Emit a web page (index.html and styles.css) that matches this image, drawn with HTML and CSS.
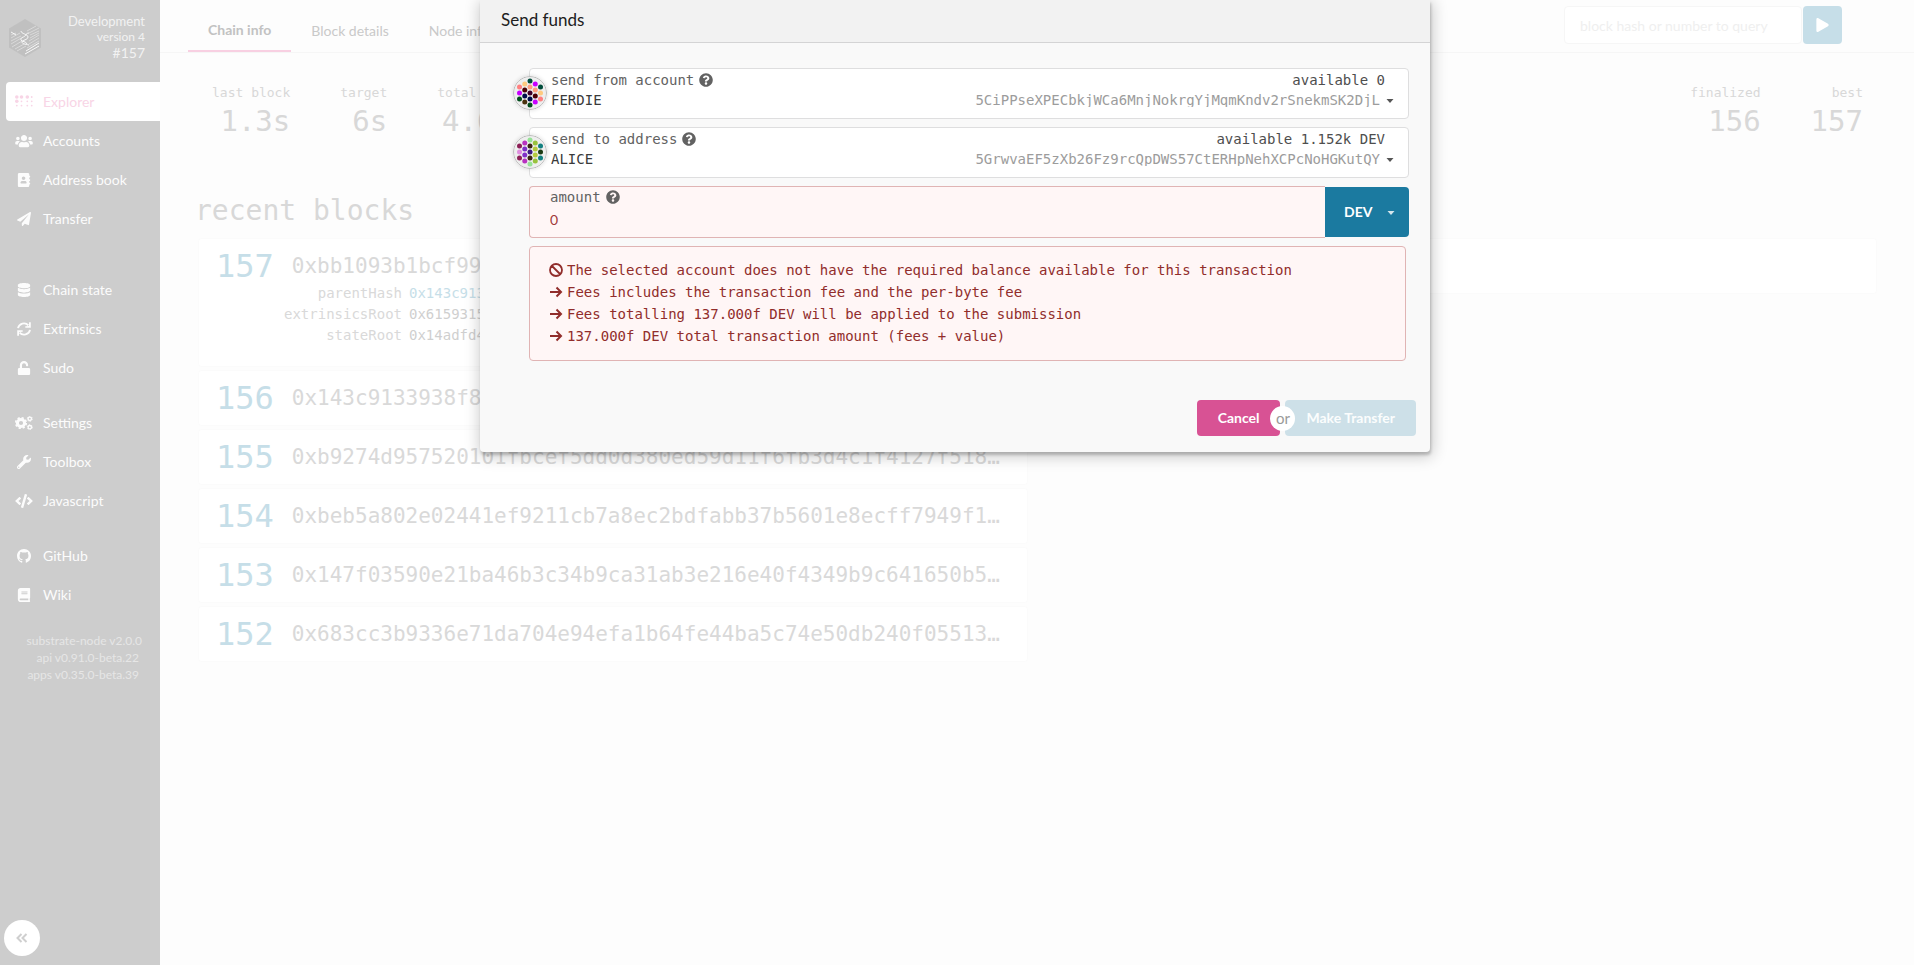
FILE: index.html
```html
<!DOCTYPE html>
<html lang="en">
<head>
<meta charset="utf-8">
<meta name="viewport" content="width=device-width, initial-scale=1">
<title>Explorer</title>
<link rel="stylesheet" href="styles.css">
</head>
<body>
<svg class="sprite" aria-hidden="true">
  <symbol id="i-help" viewBox="0 0 512 512"><path d="M504 256c0 136.997-111.043 248-248 248S8 392.997 8 256C8 119.083 119.043 8 256 8s248 111.083 248 248zM262.655 90c-54.497 0-89.255 22.957-116.549 63.758-3.536 5.286-2.353 12.415 2.715 16.258l34.699 26.31c5.205 3.947 12.621 3.008 16.665-2.122 17.864-22.658 30.113-35.797 57.303-35.797 20.429 0 45.698 13.148 45.698 32.958 0 14.976-12.363 22.667-32.534 33.976C247.128 238.528 216 254.941 216 296v4c0 6.627 5.373 12 12 12h56c6.627 0 12-5.373 12-12v-1.333c0-28.462 83.186-29.647 83.186-106.667 0-58.002-60.165-102-116.531-102zM256 338c-25.365 0-46 20.635-46 46 0 25.364 20.635 46 46 46s46-20.636 46-46c0-25.365-20.635-46-46-46z"/></symbol>
  <symbol id="i-caret" viewBox="0 0 8 5"><path d="M.5 0h7L4 4z"/></symbol>
  <symbol id="i-arrow" viewBox="0 0 14 14"><path d="M1 7h11M7.500 2.500 12 7l-4.500 4.500" fill="none" stroke="currentColor" stroke-width="2"/></symbol>
  <symbol id="i-ban" viewBox="0 0 14 14"><path d="M7 1a6 6 0 1 0 0 12A6 6 0 0 0 7 1zM3 3l8 8" fill="none" stroke="currentColor" stroke-width="1.800"/></symbol>
</svg>

<div class="app">
  <aside class="sidebar">
    <header class="brand">
      <svg class="logo" viewBox="0 0 34 38" aria-hidden="true">
        <path class="logo-hex" d="M17 0 33 9.500v19L17 38 1 28.500v-19z"/>
        <path class="logo-lines" d="M3 16l5-2M3 19l9-5M3 22l10-5M3 25l12-7M4 28l10-6M7 30l9-5M9 32l9-5M19 12l9-5M21 14l10-5M22 16l9-4M22 19l9-5M21 22l10-6M21 25l10-6M19 29l12-7"/>
        <path class="logo-bright" d="M3 13l5 3M17 35l14-8M18 32l13-8M13 12c0 3 7 3 7 6s-6 3-6 5 3 2 7 3M21 14c-3 0-3 2-4 3s-5 2-4 4 5 1 6 4"/>
      </svg>
      <div class="brand-text">
        <div class="chain">Development</div>
        <div class="version">version 4</div>
        <div class="best">#157</div>
      </div>
    </header>
    <nav class="menu">
      <ul>
        <li><a class="item active" href="#"><svg class="icon" viewBox="0 0 18 14"><g><circle cx="1.800" cy="2" r="1.800"/><circle cx="6.500" cy="2" r="1.800"/><circle cx="12.300" cy="2" r="1.800"/><circle cx="16.700" cy="2" r=".9"/><circle cx="1.800" cy="6.300" r="1.800"/><circle cx="6.500" cy="6.300" r=".9"/><circle cx="12.300" cy="6.300" r=".9"/><circle cx="16.700" cy="6.300" r=".9"/><circle cx="1.800" cy="10.600" r=".9"/><circle cx="6.500" cy="10.600" r=".9"/><circle cx="12.300" cy="10.600" r=".9"/><circle cx="16.700" cy="10.600" r=".9"/></g></svg>Explorer</a></li>
        <li><a class="item" href="#"><svg class="icon" viewBox="0 0 640 512"><path d="M96 224c35.300 0 64-28.700 64-64s-28.700-64-64-64-64 28.700-64 64 28.700 64 64 64zm448 0c35.300 0 64-28.700 64-64s-28.700-64-64-64-64 28.700-64 64 28.700 64 64 64zm32 32h-64c-17.600 0-33.500 7.100-45.100 18.600 40.300 22.100 68.900 62 75.100 109.400h66c17.700 0 32-14.300 32-32v-32c0-35.300-28.700-64-64-64zm-256 0c61.900 0 112-50.100 112-112S381.900 32 320 32 208 82.100 208 144s50.100 112 112 112zm76.800 32h-8.300c-20.800 10-43.900 16-68.500 16s-47.600-6-68.500-16h-8.300C179.600 288 128 339.600 128 403.200V432c0 26.500 21.500 48 48 48h288c26.500 0 48-21.500 48-48v-28.800c0-63.600-51.600-115.200-115.200-115.200zm-223.700-13.400C161.500 263.100 145.600 256 128 256H64c-35.300 0-64 28.700-64 64v32c0 17.700 14.300 32 32 32h65.900c6.300-47.400 34.900-87.300 75.200-109.400z"/></svg>Accounts</a></li>
        <li><a class="item" href="#"><svg class="icon" viewBox="0 0 448 512"><path d="M436 160c6.600 0 12-5.400 12-12v-40c0-6.600-5.400-12-12-12h-20V48c0-26.500-21.500-48-48-48H48C21.500 0 0 21.500 0 48v416c0 26.500 21.500 48 48 48h320c26.500 0 48-21.500 48-48v-48h20c6.600 0 12-5.400 12-12v-40c0-6.600-5.400-12-12-12h-20v-64h20c6.600 0 12-5.400 12-12v-40c0-6.600-5.400-12-12-12h-20v-64h20zm-228-32c35.300 0 64 28.700 64 64s-28.700 64-64 64-64-28.700-64-64 28.700-64 64-64zm112 236.800c0 10.600-10 19.200-22.400 19.200H118.400C106 384 96 375.400 96 364.800v-19.200c0-31.800 30.100-57.600 67.200-57.600h5c12.300 5.100 25.700 8 39.800 8s27.600-2.900 39.800-8h5c37.100 0 67.200 25.800 67.200 57.600v19.200z"/></svg>Address book</a></li>
        <li><a class="item" href="#"><svg class="icon" viewBox="0 0 512 512"><path d="M476 3.200L12.500 270.600c-18.100 10.400-15.800 35.600 2.200 43.200L121 358.400l287.300-253.200c5.500-4.900 13.300 2.600 8.600 8.300L176 407v80.500c0 23.600 28.500 32.900 42.500 15.800L282 426l124.600 52.200c14.200 6 30.400-2.900 33-18.200l72-432C515 7.800 493.300-6.800 476 3.200z"/></svg>Transfer</a></li>
      </ul>
      <ul>
        <li><a class="item" href="#"><svg class="icon" viewBox="0 0 448 512"><path d="M448 73.143v45.714C448 159.143 347.667 192 224 192S0 159.143 0 118.857V73.143C0 32.857 100.333 0 224 0s224 32.857 224 73.143zM448 176v102.857C448 319.143 347.667 352 224 352S0 319.143 0 278.857V176c48.125 33.143 136.208 48.572 224 48.572S399.874 209.143 448 176zm0 160v102.857C448 479.143 347.667 512 224 512S0 479.143 0 438.857V336c48.125 33.143 136.208 48.572 224 48.572S399.874 369.143 448 336z"/></svg>Chain state</a></li>
        <li><a class="item" href="#"><svg class="icon" viewBox="0 0 14 14"><path d="M1 6.200A6 6 0 0 1 11.400 3.400M13 7.800A6 6 0 0 1 2.600 10.600" fill="none" stroke="currentColor" stroke-width="1.800"/><path d="M13.800.3v5.500H8.300V4.300l3.700-.2V.3zM.2 13.700V8.200h5.500v1.500L2 9.900v3.800z"/></svg>Extrinsics</a></li>
        <li><a class="item" href="#"><svg class="icon" viewBox="0 0 448 512"><path d="M400 256H152V152.900c0-39.600 31.700-72.500 71.300-72.900 40-.4 72.700 32.100 72.700 72v16c0 13.300 10.700 24 24 24h32c13.300 0 24-10.700 24-24v-16C376 68 307.500-.3 223.500 0 139.500.3 72 69.500 72 153.500V256H48c-26.500 0-48 21.500-48 48v160c0 26.500 21.500 48 48 48h352c26.500 0 48-21.500 48-48V304c0-26.500-21.500-48-48-48z"/></svg>Sudo</a></li>
      </ul>
      <ul>
        <li><a class="item" href="#"><svg class="icon" viewBox="0 0 18 14"><g fill="none" stroke="currentColor"><circle cx="6" cy="7" r="3.600" stroke-width="3"/><circle cx="6" cy="7" r="5.300" stroke-width="1.600" stroke-dasharray="2.200 1.960"/><circle cx="14.800" cy="2.800" r="1.700" stroke-width="1.400"/><circle cx="14.800" cy="2.800" r="2.500" stroke-width=".9" stroke-dasharray="1.400 1.220"/><circle cx="14.800" cy="11.200" r="1.700" stroke-width="1.400"/><circle cx="14.800" cy="11.200" r="2.500" stroke-width=".9" stroke-dasharray="1.400 1.220"/></g></svg>Settings</a></li>
        <li><a class="item" href="#"><svg class="icon" viewBox="0 0 512 512"><path d="M507.730 109.100c-2.240-9.030-13.540-12.090-20.120-5.510l-74.360 74.360-67.880-11.310-11.310-67.880 74.360-74.360c6.620-6.620 3.430-17.900-5.660-20.160-47.380-11.740-99.550.91-136.580 37.930-39.640 39.640-50.550 97.100-34.050 147.200L18.740 402.760c-24.990 24.990-24.990 65.510 0 90.500 24.990 24.990 65.510 24.990 90.500 0l213.210-213.210c50.120 16.710 107.470 5.680 147.370-34.220 37.070-37.070 49.700-89.320 37.910-136.730zM64 472c-13.250 0-24-10.750-24-24 0-13.260 10.750-24 24-24s24 10.740 24 24c0 13.250-10.750 24-24 24z"/></svg>Toolbox</a></li>
        <li><a class="item" href="#"><svg class="icon" viewBox="0 0 640 512"><path d="M278.900 511.500l-61-17.700c-6.400-1.800-10-8.500-8.200-14.900L346.200 8.700c1.800-6.400 8.500-10 14.900-8.200l61 17.700c6.400 1.800 10 8.500 8.200 14.900L293.800 503.300c-1.900 6.400-8.500 10.100-14.900 8.200zm-114-112.200l43.500-46.400c4.600-4.900 4.300-12.700-.8-17.200L117 256l90.600-79.700c5.100-4.500 5.500-12.300.8-17.200l-43.500-46.400c-4.500-4.800-12.100-5.100-17-.5L3.800 247.200c-5.100 4.700-5.100 12.800 0 17.500l144.100 135.100c4.900 4.600 12.500 4.400 17-.5zm327.200.6l144.100-135.100c5.100-4.700 5.100-12.800 0-17.500L492.100 112.100c-4.800-4.500-12.400-4.300-17 .5L431.600 159c-4.600 4.900-4.300 12.700.8 17.200L523 256l-90.600 79.700c-5.100 4.500-5.500 12.300-.8 17.200l43.500 46.400c4.500 4.900 12.100 5.100 17 .6z"/></svg>Javascript</a></li>
      </ul>
      <ul>
        <li><a class="item" href="#"><svg class="icon" viewBox="0 0 16 16"><path d="M8 0C3.580 0 0 3.580 0 8c0 3.540 2.290 6.530 5.470 7.590.4.070.55-.17.55-.38 0-.19-.01-.82-.01-1.490-2.010.37-2.530-.49-2.690-.94-.09-.23-.48-.94-.82-1.130-.28-.15-.68-.52-.01-.53.63-.01 1.080.58 1.230.82.72 1.210 1.870.87 2.330.66.07-.52.28-.87.51-1.070-1.780-.2-3.640-.89-3.640-3.950 0-.87.31-1.590.82-2.150-.08-.2-.36-1.020.08-2.120 0 0 .67-.21 2.200.82.64-.18 1.320-.27 2-.27s1.360.09 2 .27c1.530-1.040 2.200-.82 2.200-.82.44 1.100.16 1.920.08 2.120.51.56.82 1.270.82 2.150 0 3.070-1.870 3.750-3.650 3.950.29.25.54.73.54 1.480 0 1.070-.01 1.930-.01 2.200 0 .21.15.46.55.38A8.010 8.010 0 0016 8c0-4.420-3.580-8-8-8z"/></svg>GitHub</a></li>
        <li><a class="item" href="#"><svg class="icon" viewBox="0 0 448 512"><path d="M448 360V24c0-13.300-10.700-24-24-24H96C43 0 0 43 0 96v320c0 53 43 96 96 96h328c13.300 0 24-10.700 24-24v-16c0-7.500-3.500-14.300-8.900-18.700-4.200-15.400-4.200-59.300 0-74.700 5.400-4.300 8.900-11.100 8.900-18.600zM128 134c0-3.300 2.700-6 6-6h212c3.300 0 6 2.700 6 6v20c0 3.300-2.700 6-6 6H134c-3.300 0-6-2.700-6-6v-20zm0 64c0-3.300 2.700-6 6-6h212c3.300 0 6 2.700 6 6v20c0 3.300-2.700 6-6 6H134c-3.300 0-6-2.700-6-6v-20zm253.400 250H96c-17.700 0-32-14.300-32-32 0-17.600 14.400-32 32-32h285.400c-1.900 17.100-1.900 46.900 0 64z"/></svg>Wiki</a></li>
      </ul>
    </nav>
    <div class="versions">
      <div>substrate-node v2.0.0</div>
      <div class="inset">api v0.91.0-beta.22</div>
      <div class="inset">apps v0.35.0-beta.39</div>
    </div>
    <button class="collapse" type="button" aria-label="Collapse sidebar"><svg viewBox="0 0 12 10"><path d="M5.500 1 1.500 5l4 4M10.500 1l-4 4 4 4" fill="none" stroke="currentColor" stroke-width="2"/></svg></button>
  </aside>

  <main class="main">
    <div class="tabs">
      <nav class="tab-list">
        <a class="tab current" href="#">Chain info</a>
        <a class="tab" href="#">Block details</a>
        <a class="tab" href="#">Node info</a>
      </nav>
      <form class="query">
        <input type="text" aria-label="Block query" placeholder="block hash or number to query">
        <button type="button" aria-label="Query"><svg viewBox="0 0 448 512"><path d="M424.400 214.700L72.400 6.600C43.800-10.300 0 6.100 0 47.900V464c0 37.500 40.700 60.100 72.400 41.300l352-208c31.400-18.500 31.500-64.100 0-82.600z"/></svg></button>
      </form>
    </div>

    <section class="summary">
      <div class="stats">
        <div class="stat"><span class="stat-label">last block</span><span class="stat-value">1.3s</span></div>
        <div class="stat"><span class="stat-label">target</span><span class="stat-value">6s</span></div>
        <div class="stat"><span class="stat-label">total issuance</span><span class="stat-value">4.611k</span></div>
      </div>
      <div class="stats">
        <div class="stat"><span class="stat-label">finalized</span><span class="stat-value">156</span></div>
        <div class="stat"><span class="stat-label">best</span><span class="stat-value">157</span></div>
      </div>
    </section>

    <div class="columns">
      <section>
        <h1>recent blocks</h1>
        <div class="blocks">
          <article class="block">
            <div class="block-head"><a class="number" href="#">157</a><span class="hash">0xbb1093b1bcf99…</span></div>
            <dl class="details">
              <dt>parentHash</dt><dd><a href="#">0x143c9133938f8…</a></dd>
              <dt>extrinsicsRoot</dt><dd>0x6159315…</dd>
              <dt>stateRoot</dt><dd>0x14adfd4…</dd>
            </dl>
          </article>
          <article class="block"><div class="block-head"><a class="number" href="#">156</a><span class="hash">0x143c9133938f8…</span></div></article>
          <article class="block"><div class="block-head"><a class="number" href="#">155</a><span class="hash">0xb9274d957520101fbcef5dd0d380ed59d11f6fb3d4c1f4127f518…</span></div></article>
          <article class="block"><div class="block-head"><a class="number" href="#">154</a><span class="hash">0xbeb5a802e02441ef9211cb7a8ec2bdfabb37b5601e8ecff7949f1…</span></div></article>
          <article class="block"><div class="block-head"><a class="number" href="#">153</a><span class="hash">0x147f03590e21ba46b3c34b9ca31ab3e216e40f4349b9c641650b5…</span></div></article>
          <article class="block"><div class="block-head"><a class="number" href="#">152</a><span class="hash">0x683cc3b9336e71da704e94efa1b64fe44ba5c74e50db240f05513…</span></div></article>
        </div>
      </section>
      <section>
        <h1>recent events</h1>
        <div class="blocks"><article class="block"></article></div>
      </section>
    </div>
  </main>
</div>

<div class="overlay">
  <div class="modal" role="dialog" aria-modal="true" aria-labelledby="modal-title">
    <h2 class="modal-title" id="modal-title">Send funds</h2>
    <form class="modal-body">
      <div class="field">
        <svg class="identicon" viewBox="-17 -17 34 34" aria-hidden="true"><circle class="ring" r="16.500"/>
          <g fill="#ff7f7f"><circle cx="-10.500" cy="-6" r="2.500"/><circle cx="10.500" cy="6" r="2.500"/></g>
          <g fill="#c800ff"><circle cx="-10.500" r="2.500"/><circle cx="5.250" cy="9" r="2.500"/><circle cx="5.250" cy="-9" r="2.500"/></g>
          <g fill="#004c1a"><circle cx="-10.500" cy="6" r="2.500"/><circle cy="12" r="2.500"/></g>
          <g fill="#ffca80"><circle cx="-5.250" cy="-9" r="2.500"/><circle cx="10.500" r="2.500"/></g>
          <g fill="#4c0005"><circle cx="-5.250" cy="-3" r="2.500"/><circle cx="5.250" cy="3" r="2.500"/></g>
          <g fill="#000d4c"><circle cx="-5.250" cy="3" r="2.500"/><circle cy="6" r="2.500"/></g>
          <circle cx="-5.250" cy="9" r="2.500" fill="#4a3310"/>
          <g fill="#004c3a"><circle cy="-12" r="2.500"/><circle cx="10.500" cy="-6" r="2.500"/></g>
          <g fill="#ff9f80"><circle cy="-6" r="2.500"/><circle cx="5.250" cy="-3" r="2.500"/></g>
          <circle r="2.500" fill="#400028"/>
        </svg>
        <div class="field-top"><label for="from">send from account</label><svg class="help"><use href="#i-help"/></svg><span class="available">available 0</span></div>
        <div class="field-row"><select id="from"><option>FERDIE</option></select><span class="address">5CiPPseXPECbkjWCa6MnjNokrgYjMqmKndv2rSnekmSK2DjL</span><svg class="caret"><use href="#i-caret"/></svg></div>
      </div>
      <div class="field">
        <svg class="identicon" viewBox="-17 -17 34 34" aria-hidden="true"><circle class="ring" r="16.500"/>
          <g fill="#8c1f56"><circle cx="-10.500" cy="-6" r="2.500"/><circle cx="-10.500" cy="6" r="2.500"/></g>
          <circle cx="-10.500" r="2.500" fill="#e08ee0"/>
          <g fill="#b832c0"><circle cx="-5.250" cy="-9" r="2.500"/><circle cx="-5.250" cy="9" r="2.500"/></g>
          <g fill="#8030c8"><circle cx="-5.250" cy="-3" r="2.500"/><circle cx="-5.250" cy="3" r="2.500"/></g>
          <g fill="#97e297"><circle cy="-12" r="2.500"/><circle cy="12" r="2.500"/></g>
          <g fill="#3a2412"><circle cy="-6" r="2.500"/><circle cy="6" r="2.500"/></g>
          <circle r="2.500" fill="#3c1a80"/>
          <g fill="#98c23c"><circle cx="5.250" cy="-9" r="2.500"/><circle cx="5.250" cy="9" r="2.500"/></g>
          <g fill="#b5ca3f"><circle cx="5.250" cy="-3" r="2.500"/><circle cx="5.250" cy="3" r="2.500"/></g>
          <g fill="#138080"><circle cx="10.500" cy="-6" r="2.500"/><circle cx="10.500" cy="6" r="2.500"/></g>
          <circle cx="10.500" r="2.500" fill="#1c3c14"/>
        </svg>
        <div class="field-top"><label for="to">send to address</label><svg class="help"><use href="#i-help"/></svg><span class="available">available 1.152k DEV</span></div>
        <div class="field-row"><select id="to"><option>ALICE</option></select><span class="address">5GrwvaEF5zXb26Fz9rcQpDWS57CtERHpNehXCPcNoHGKutQY</span><svg class="caret"><use href="#i-caret"/></svg></div>
      </div>
      <div class="amount">
        <div class="amount-box">
          <div class="field-top"><label for="amount">amount</label><svg class="help"><use href="#i-help"/></svg></div>
          <input id="amount" type="text" value="0">
        </div>
        <div class="unit"><select aria-label="Unit"><option>DEV</option></select><svg class="caret"><use href="#i-caret"/></svg></div>
      </div>
      <ul class="errors">
        <li><svg><use href="#i-ban"/></svg>The selected account does not have the required balance available for this transaction</li>
        <li><svg><use href="#i-arrow"/></svg>Fees includes the transaction fee and the per-byte fee</li>
        <li><svg><use href="#i-arrow"/></svg>Fees totalling 137.000f DEV will be applied to the submission</li>
        <li><svg><use href="#i-arrow"/></svg>137.000f DEV total transaction amount (fees + value)</li>
      </ul>
      <div class="actions">
        <button class="cancel" type="button">Cancel</button>
        <span class="or">or</span>
        <button class="submit" type="button" disabled>Make Transfer</button>
      </div>
    </form>
  </div>
</div>
</body>
</html>
```
FILE: styles.css
```css
* {
  box-sizing: border-box;
}

body {
  margin: 0;
  font-family: Lato, "Liberation Sans", sans-serif;
  font-size: 14px;
  line-height: 20px;
  color: #4e4e4e;
  background: #fdfdfd;
}

button,
input,
select {
  font: inherit;
  color: inherit;
}

a {
  color: inherit;
  text-decoration: none;
}

ul,
dl,
dd,
h1,
h2 {
  margin: 0;
  padding: 0;
  list-style: none;
  font-weight: 400;
}

svg {
  fill: currentColor;
}

.sprite {
  display: none;
}

.app {
  display: flex;
  min-height: 100vh;
}

/* sidebar */

.sidebar {
  display: flex;
  flex-direction: column;
  flex: none;
  width: 160px;
  background: #cdcdcd;
  color: #fcfcfc;
}

.brand {
  display: flex;
  justify-content: space-between;
  padding: 14px 15px 0 8px;
  height: 82px;
}

.logo {
  width: 34px;
  height: 38px;
  margin-top: 5px;
}

.logo-hex {
  fill: #c0c0c0;
}

.logo-lines,
.logo-bright {
  fill: none;
  stroke: #dadada;
}

.logo-bright {
  stroke: #f8f8f8;
}

.brand-text {
  text-align: right;
  color: #f2f2f2;
}

.chain {
  font-size: 13px;
  line-height: 15px;
}

.version {
  font-size: 12px;
  line-height: 15px;
}

.best {
  line-height: 18px;
}

.menu {
  display: grid;
  gap: 16px;
  padding-left: 6px;
  font-weight: 500;
}

.menu ul:first-child {
  margin-bottom: 16px;
}

.item {
  display: flex;
  align-items: center;
  gap: 10px;
  height: 39px;
  padding-left: 9px;
  border-radius: 4px 0 0 4px;
}

.item.active {
  background: #fff;
  color: #f8d5e6;
}

.icon {
  flex: none;
  width: 18px;
  height: 14px;
}

.versions {
  margin-top: 18px;
  padding-right: 18px;
  text-align: right;
  font-size: 12px;
  line-height: 17px;
  color: #e6e6e6;
}

.inset {
  padding-right: 3px;
}

.collapse {
  display: grid;
  place-items: center;
  width: 36px;
  height: 36px;
  margin: auto 0 9px 4px;
  padding: 0;
  border: 0;
  border-radius: 50%;
  background: #fff;
  color: #cfcfcf;
}

.collapse svg {
  width: 12px;
  height: 10px;
}

/* page */

.main {
  flex: 1;
  min-width: 0;
}

.tabs {
  display: flex;
  justify-content: space-between;
  height: 53px;
  padding: 0 72px 0 28px;
  border-bottom: 1px solid #f6f6f6;
}

.tab-list {
  display: flex;
  color: #c9c9c9;
}

.tab {
  padding: 21px 20px 9px;
}

.tab.current {
  padding-top: 20px;
  border-bottom: 2px solid #f8d0e2;
  font-weight: 700;
  color: #c2c2c2;
}

.query {
  display: flex;
  align-items: flex-start;
  gap: 1px;
  padding-top: 6px;
}

.query input {
  width: 238px;
  height: 38px;
  padding: 1px 14px 0 15px;
  border: 1px solid #f6f6f6;
  border-radius: 4px;
  background: #fff;
}

.query input::placeholder {
  color: #efefef;
  opacity: 1;
}

.query button {
  display: grid;
  place-items: center;
  width: 39px;
  height: 38px;
  padding: 0;
  border: 0;
  border-radius: 4px;
  background: #c6dee8;
  color: #fff;
}

.query svg {
  width: 13px;
  height: 14px;
}

.summary {
  display: flex;
  justify-content: space-between;
  padding: 31px 51px 0 52px;
  font-family: "DejaVu Sans Mono", monospace;
  color: #d8d8d8;
}

.stats {
  display: flex;
  gap: 50px;
}

.stat {
  display: flex;
  flex-direction: column;
  text-align: right;
}

.stat-label {
  font-size: 13px;
  line-height: 18px;
}

.stat-value {
  font-size: 29px;
  line-height: 38px;
}

.columns {
  display: grid;
  grid-template-columns: 1fr 1fr;
  gap: 22px;
  padding: 52px 38px 0 39px;
  font-family: "DejaVu Sans Mono", monospace;
}

h1 {
  margin-left: -4px;
  font-size: 28px;
  line-height: 38px;
  color: #d8d8d8;
}

.blocks {
  display: grid;
  gap: 5px;
  margin-top: 9px;
}

.block {
  min-height: 54px;
  padding: 6px 17px;
  border-radius: 3px;
  background: #fff;
  box-shadow: 0 0 0 1px #fbfbfb;
}

.block-head {
  display: flex;
  align-items: center;
  gap: 18px;
  height: 42px;
}

.number {
  font-size: 32px;
  line-height: 40px;
  color: #c6dee8;
}

.hash {
  white-space: nowrap;
  font-size: 21px;
  line-height: 30px;
  color: #d9d9d9;
}

.details {
  display: grid;
  grid-template-columns: 186px 1fr;
  column-gap: 7px;
  margin-top: -4px;
  padding-bottom: 14px;
  line-height: 21px;
  color: #d9d9d9;
}

.details dt {
  text-align: right;
}

.details dd {
  color: #cfcfcf;
}

.details a {
  color: #c6dee8;
}

/* dialog */

.overlay {
  position: absolute;
  inset: 0;
  display: flex;
  justify-content: center;
  align-items: flex-start;
  padding-right: 4px;
}

.modal {
  width: 950px;
  max-width: 100%;
  border-radius: 0 0 4px 4px;
  background: #f9f9f9;
  box-shadow: 1px 3px 3px rgba(0, 0, 0, 0.2), 1px 3px 15px 2px rgba(0, 0, 0, 0.2);
}

.modal-title {
  padding: 8px 21px 10px;
  border-bottom: 1px solid #d4d4d5;
  background: #f2f2f2;
  font-size: 17px;
  line-height: 24px;
  color: #202020;
}

.modal-body {
  display: grid;
  gap: 8px;
  padding: 25px 21px 16px 49px;
  font-family: "DejaVu Sans Mono", monospace;
}

.field {
  position: relative;
  height: 51px;
  padding: 2px 14px 0 21px;
  border: 1px solid #dededf;
  border-radius: 4px;
  background: #fff;
}

.identicon {
  position: absolute;
  left: -17px;
  top: 7px;
  width: 34px;
  height: 34px;
  border-radius: 50%;
  box-shadow: 0 0 4px rgba(0, 0, 0, 0.15);
}

.ring {
  fill: #eee;
  stroke: #bbb;
}

.field-top {
  display: flex;
  align-items: center;
  gap: 5px;
  line-height: 18px;
  color: #626262;
}

.help {
  width: 14px;
  height: 14px;
}

.available {
  margin-left: auto;
  padding-right: 9px;
  color: #4e4e4e;
}

.field-row {
  display: flex;
  align-items: center;
  height: 22px;
  color: #3a3a3a;
}

.field-row select {
  flex: 1;
  min-width: 0;
  padding: 0;
  border: 0;
  background: none;
  appearance: none;
}

.address {
  overflow: hidden;
  line-height: 14px;
  color: #9c9c9c;
}

.caret {
  width: 8px;
  height: 5px;
  margin: 3px 0 0 6px;
  color: #555;
}

.amount {
  display: flex;
  align-items: center;
}

.amount-box {
  flex: 1;
  height: 52px;
  padding: 1px 20px 0;
  border: 1px solid #e0b4b4;
  border-right: 0;
  border-radius: 4px 0 0 4px;
  background: #fff6f6;
}

.amount input {
  display: block;
  width: 100%;
  height: 20px;
  margin-top: 4px;
  padding: 0;
  border: 0;
  background: none;
  font-family: Lato, sans-serif;
  color: #9f3a38;
}

.unit {
  display: flex;
  align-items: center;
  width: 84px;
  height: 50px;
  padding: 0 14px 0 19px;
  border-radius: 0 4px 4px 0;
  background: #1b7aa0;
  color: #fff;
}

.unit select {
  flex: 1;
  min-width: 0;
  padding: 0;
  border: 0;
  background: none;
  appearance: none;
  font-family: Lato, sans-serif;
  font-weight: 700;
}

.unit .caret {
  color: #d5e6ed;
}

.errors {
  margin-right: 3px;
  padding: 12px 19px 13px;
  border: 1px solid #e0b4b4;
  border-radius: 4px;
  background: #fff6f6;
  line-height: 22px;
  color: #912d2b;
}

.errors li {
  display: flex;
  align-items: center;
  gap: 4px;
  min-height: 22px;
}

.errors svg {
  flex: none;
  width: 14px;
  height: 14px;
}

.actions {
  display: flex;
  justify-content: flex-end;
  align-items: center;
  margin: 31px -7px 0 0;
  font-family: Lato, sans-serif;
}

.actions button {
  height: 36px;
  padding: 0 21px;
  border: 0;
  border-radius: 4px;
  font-weight: 700;
  color: #fff;
}

.actions .cancel {
  background: #d85294;
}

.actions .submit {
  padding: 0 21px;
  background: #cde0e8;
  color: #fbfdfd;
}

.or {
  z-index: 1;
  width: 25px;
  height: 25px;
  margin: 0 -10px;
  border-radius: 50%;
  background: #fff;
  text-align: center;
  font-size: 15px;
  line-height: 24px;
  color: #999;
}
```
